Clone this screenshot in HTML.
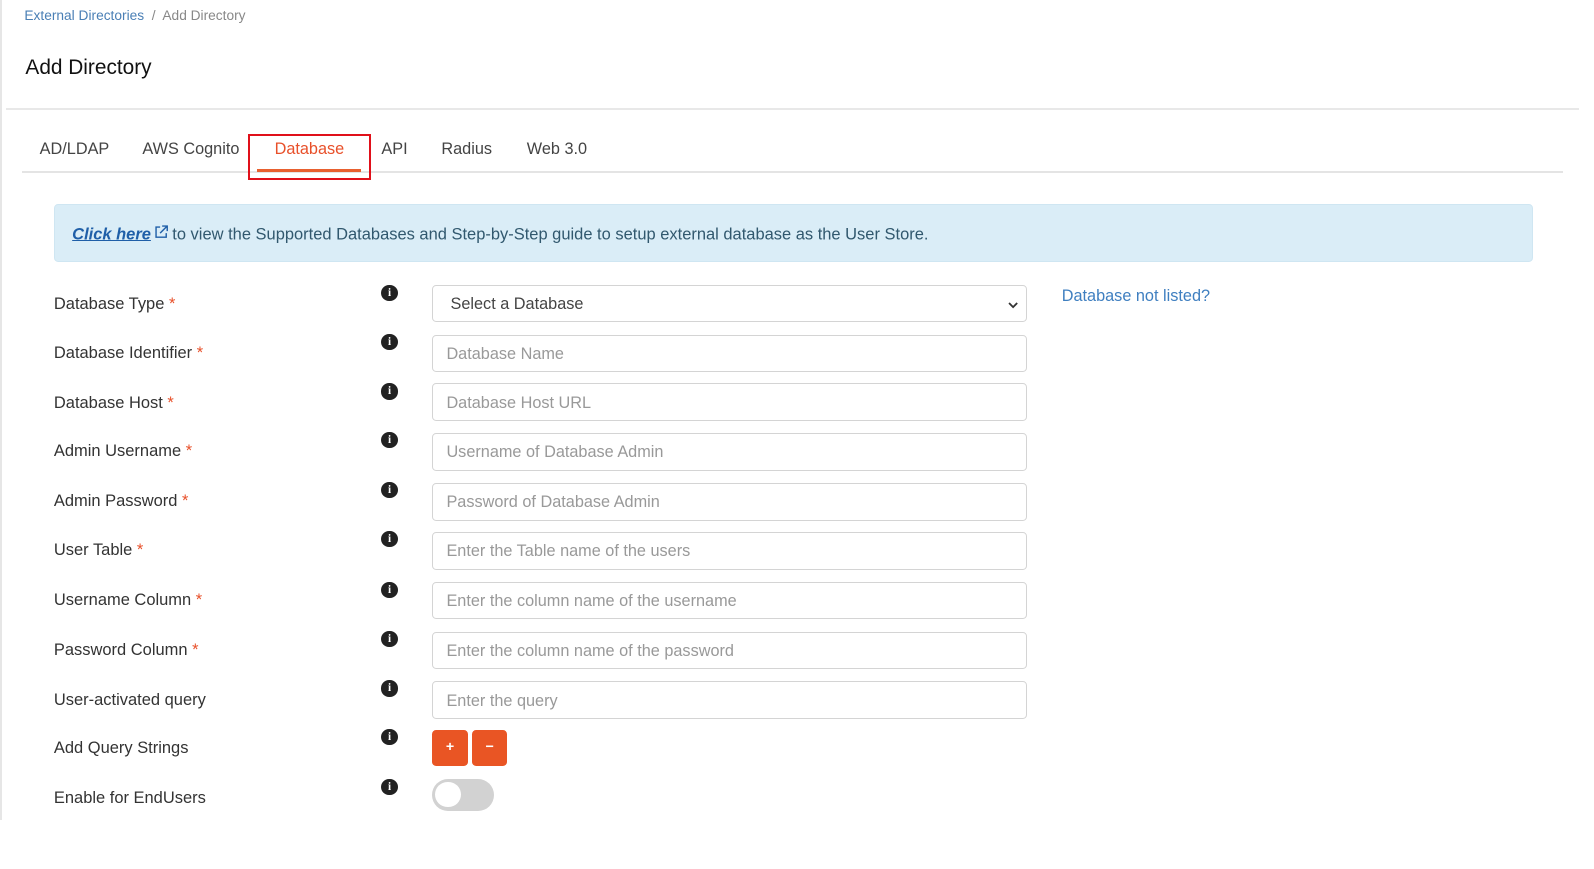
<!DOCTYPE html>
<html><head><meta charset="utf-8"><style>
*{box-sizing:border-box;margin:0;padding:0}
body{width:1594px;height:869px;background:#fff;font-family:"Liberation Sans",sans-serif;overflow:hidden;color:#333}
#w{position:relative;zoom:1.017;width:1565px;height:854px}
.lb{position:absolute;left:0;top:0;width:2px;height:806px;background:#e6e6e6}
.bc{position:absolute;left:24px;top:8px;font-size:13.5px;color:#888}
.bc a{color:#4a7fb5;text-decoration:none}
h1{position:absolute;left:25px;top:55px;font-size:20.5px;font-weight:normal;color:#111}
.hl{position:absolute;left:6px;top:106px;width:1547px;height:2px;background:#e8e8e8}
.tl{position:absolute;left:22px;top:168px;width:1515px;height:2px;background:#e4e4e4}
.tab{position:absolute;top:138px;font-size:16px;color:#444}
.act{color:#e8502a}
.ul{position:absolute;left:253px;top:166px;width:102px;height:3px;background:#e8602f}
.box{position:absolute;left:244px;top:132px;width:121px;height:45px;border:2px solid #e0101a}
.info{position:absolute;left:53px;top:201px;width:1454px;height:57px;background:#daedf7;border:1px solid #cfe6f2;border-radius:4px;font-size:16.2px;color:#31586e;padding:18px 17px}
.info a{color:#1f5fa8;font-weight:bold;font-style:italic;text-decoration:underline}
.lab{position:absolute;left:53px;font-size:16.2px;color:#333}
.lab span{color:#e8502a}
.ic{position:absolute;left:375px;width:16px;height:16px;border-radius:50%;background:#222;color:#fff;font:bold 11px "Liberation Serif",serif;text-align:center;line-height:16px}
.inp{position:absolute;left:425px;width:585px;height:37px;border:1px solid #d4d4d4;border-radius:4px;font-size:16px;color:#999;padding:9px 13px}
.sel{color:#444;padding-left:17px}
.btn{position:absolute;top:718px;width:35px;height:35px;background:#e95524;border-radius:4px;color:#fff;font-size:14px;font-weight:bold;text-align:center;line-height:35px}
.tg{position:absolute;left:425px;top:766px;width:61px;height:31px;border-radius:16px;background:#d2d2d2}
.tg i{position:absolute;left:3px;top:3px;width:25px;height:25px;border-radius:50%;background:#fff}
.nl{position:absolute;left:1044px;top:282px;font-size:16px;color:#3f7fc0}
</style></head><body><div id="w">
<div class="lb"></div>
<div class="bc"><a>External Directories</a> &nbsp;/&nbsp; Add Directory</div>
<h1>Add Directory</h1>
<div class="hl"></div>
<div class="tab" style="left:39px">AD/LDAP</div>
<div class="tab" style="left:140px">AWS Cognito</div>
<div class="tab act" style="left:270px">Database</div>
<div class="tab" style="left:375px">API</div>
<div class="tab" style="left:434px">Radius</div>
<div class="tab" style="left:518px">Web 3.0</div>
<div class="tl"></div>
<div class="ul"></div>
<div class="box"></div>
<div class="info"><a>Click here</a><svg width="16" height="16" viewBox="0 0 16 16" style="vertical-align:-1px;margin:0 3px 0 2px"><path d="M7 3H3v10h10V9M9 2h5v5M14 2L7 9" fill="none" stroke="#1f5fa8" stroke-width="1.4"/></svg>to view the Supported Databases and Step-by-Step guide to setup external database as the User Store.</div>
<div class="nl">Database not listed?</div>

<div class="lab" style="top:290px">Database Type <span>*</span></div>
<div class="lab" style="top:338px">Database Identifier <span>*</span></div>
<div class="lab" style="top:387px">Database Host <span>*</span></div>
<div class="lab" style="top:435px">Admin Username <span>*</span></div>
<div class="lab" style="top:484px">Admin Password <span>*</span></div>
<div class="lab" style="top:532px">User Table <span>*</span></div>
<div class="lab" style="top:581px">Username Column <span>*</span></div>
<div class="lab" style="top:630px">Password Column <span>*</span></div>
<div class="lab" style="top:679px">User-activated query</div>
<div class="lab" style="top:727px">Add Query Strings</div>
<div class="lab" style="top:776px">Enable for EndUsers</div>

<div class="ic" style="top:280px">i</div>
<div class="ic" style="top:328px">i</div>
<div class="ic" style="top:377px">i</div>
<div class="ic" style="top:425px">i</div>
<div class="ic" style="top:474px">i</div>
<div class="ic" style="top:522px">i</div>
<div class="ic" style="top:572px">i</div>
<div class="ic" style="top:620px">i</div>
<div class="ic" style="top:669px">i</div>
<div class="ic" style="top:717px">i</div>
<div class="ic" style="top:766px">i</div>

<div class="inp sel" style="top:280px">Select a Database<svg width="12" height="8" viewBox="0 0 12 8" style="position:absolute;right:7px;top:15px"><path d="M2 2l4 4 4-4" fill="none" stroke="#333" stroke-width="1.8"/></svg></div>
<div class="inp" style="top:329px">Database Name</div>
<div class="inp" style="top:377px">Database Host URL</div>
<div class="inp" style="top:426px">Username of Database Admin</div>
<div class="inp" style="top:475px">Password of Database Admin</div>
<div class="inp" style="top:523px">Enter the Table name of the users</div>
<div class="inp" style="top:572px">Enter the column name of the username</div>
<div class="inp" style="top:621px">Enter the column name of the password</div>
<div class="inp" style="top:670px">Enter the query</div>
<div class="btn" style="left:425px">+</div>
<div class="btn" style="left:464px">−</div>
<div class="tg"><i></i></div>
</div></body></html>
